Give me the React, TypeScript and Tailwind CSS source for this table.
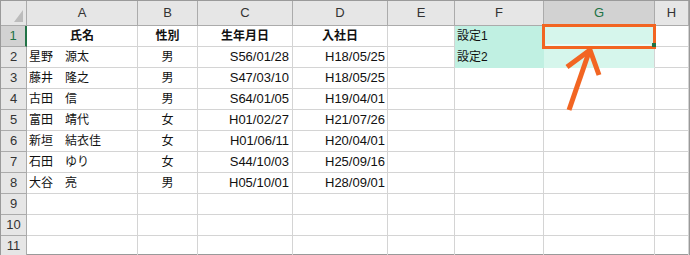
import React from 'react';

const font = { fontFamily: '"Liberation Sans", "Noto Sans CJK JP", sans-serif' };

const colWidths = 'grid-cols-[26px_111px_60px_95px_95px_67px_89px_111px_1fr]';
const columns = ['A', 'B', 'C', 'D', 'E', 'F', 'G', 'H'];

type Row = string[];

// 社員データ (A〜D列)
const rows: Row[] = [
  ['氏名', '性別', '生年月日', '入社日'],
  ['星野　源太', '男', 'S56/01/28', 'H18/05/25'],
  ['藤井　隆之', '男', 'S47/03/10', 'H18/05/25'],
  ['古田　信', '男', 'S64/01/05', 'H19/04/01'],
  ['富田　靖代', '女', 'H01/02/27', 'H21/07/26'],
  ['新垣　結衣佳', '女', 'H01/06/11', 'H20/04/01'],
  ['石田　ゆり', '女', 'S44/10/03', 'H25/09/16'],
  ['大谷　亮', '男', 'H05/10/01', 'H28/09/01'],
];

const Cell: React.FC<{ className?: string; children?: React.ReactNode }> = ({ className = '', children }) => (
  <div className={`flex items-center overflow-hidden whitespace-nowrap border-r border-b border-[#d4d4d4] text-[#111] ${className}`}>
    {children}
  </div>
);

const App: React.FC = () => {
  return (
    <div className="relative w-[690px] h-[255px] border border-[#9a9a9a] bg-white" style={font}>
      {/* Column headers */}
      <div className={`grid ${colWidths} h-[25px]`}>
        <div className="relative bg-[#e6e6e6] border-r border-b border-[#ababab]">
          <div className="absolute right-[3px] bottom-[3px] w-0 h-0 border-l-[9px] border-l-transparent border-b-[12px] border-b-[#bcbcbc]" />
        </div>
        {columns.map((c) => (
          <div
            key={c}
            className={`flex items-center justify-center border-r border-b border-[#ababab] text-[13px] ${
              c === 'G' ? 'bg-[#d2d2d2] text-[#217346]' : 'bg-[#e6e6e6] text-[#333]'
            }`}
          >
            {c}
          </div>
        ))}
      </div>

      {/* Rows 1-11 */}
      {Array.from({ length: 11 }, (_, i) => {
        const data = rows[i];
        const isHeader = i === 0;
        const last = i === 10;
        return (
          <div key={i} className={`grid ${colWidths} ${last ? 'h-[18px]' : 'h-[21px]'}`}>
            <div
              className={`flex items-center justify-center text-[13px] border-b ${
                i === 0
                  ? 'bg-[#d2d2d2] text-[#217346] border-r-2 border-r-[#217346] border-b-[#ababab]'
                  : 'bg-[#e6e6e6] text-[#333] border-r border-[#ababab]'
              }`}
            >
              {i + 1}
            </div>
            <Cell className={`text-[12px] ${isHeader ? 'justify-center font-bold' : 'pl-[2px]'}`}>{data?.[0]}</Cell>
            <Cell className={`justify-center text-[12px] ${isHeader ? 'font-bold' : ''}`}>{data?.[1]}</Cell>
            <Cell className={isHeader ? 'justify-center text-[12px] font-bold' : 'justify-end pr-[3px] text-[13px]'}>{data?.[2]}</Cell>
            <Cell className={isHeader ? 'justify-center text-[12px] font-bold' : 'justify-end pr-[2px] text-[13px]'}>{data?.[3]}</Cell>
            <Cell />
            <Cell className={`text-[12px] pl-[2px] ${i < 2 ? 'bg-[#c0f0e2] border-b-[#c0f0e2] border-r-[#c0f0e2]' : ''}`}>
              {i === 0 ? '設定1' : i === 1 ? '設定2' : ''}
            </Cell>
            <Cell className={i < 2 ? 'bg-[#d6f6ec] border-b-[#d6f6ec]' : ''} />
            <Cell className={last ? 'border-b-0' : ''} />
          </div>
        );
      })}

      {/* Annotation: highlight on G1 and arrow */}
      <svg className="absolute left-[-1px] top-[-1px]" width="690" height="255" viewBox="0 0 690 255">
        <line x1="546" y1="45" x2="651" y2="45" stroke="#ffffff" strokeWidth="1" />
        <rect x="543.5" y="25.5" width="111" height="22" fill="none" stroke="#f26522" strokeWidth="3" />
        <rect x="652" y="43" width="4" height="4" fill="#217346" />
        <line x1="569" y1="110" x2="589" y2="52" stroke="#f26522" strokeWidth="5" />
        <polyline points="567,67 590,50 599,75" fill="none" stroke="#f26522" strokeWidth="5" strokeLinejoin="miter" />
      </svg>
    </div>
  );
};

export default App;
